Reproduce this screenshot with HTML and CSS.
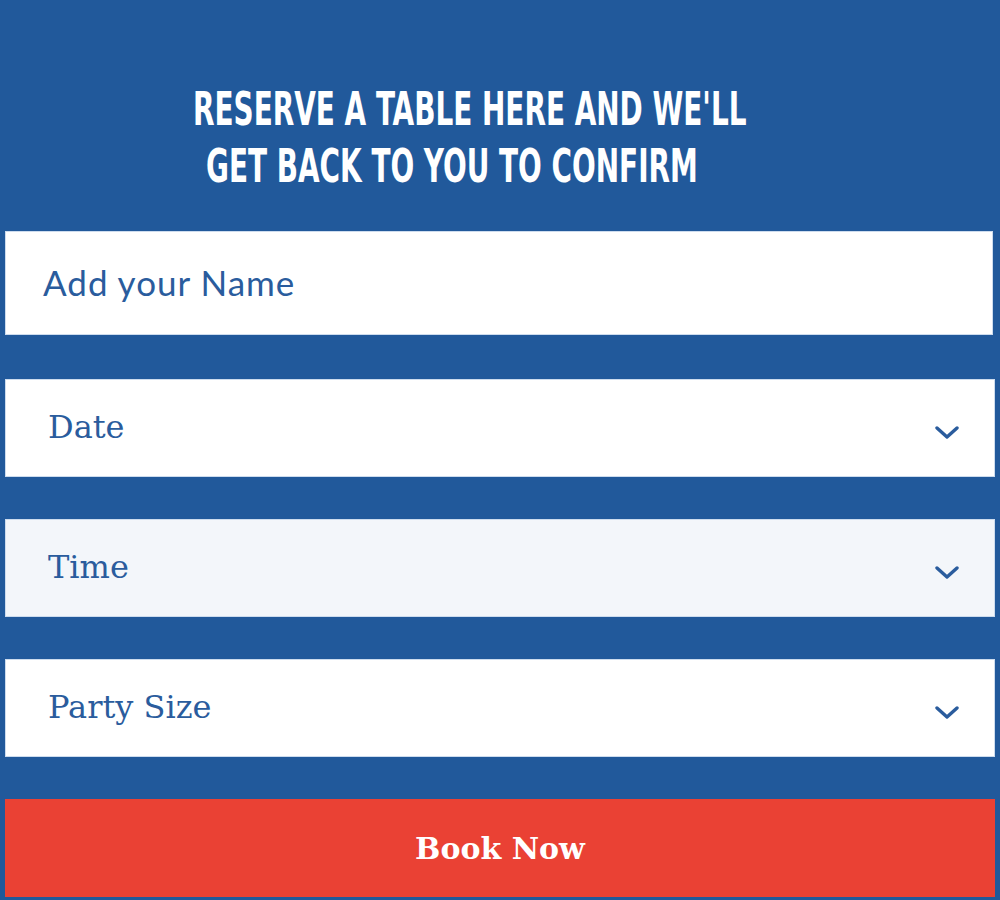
FILE: index.html
```html
<!DOCTYPE html>
<html lang="en">
<head>
<meta charset="utf-8">
<title>Reserve a table</title>
<link rel="stylesheet" href="styles.css">
</head>
<body>
<main class="reserve">
  <h1 class="title">
    <span class="line line-1">RESERVE A TABLE HERE AND WE'LL</span>
    <span class="line line-2">GET BACK TO YOU TO CONFIRM</span>
  </h1>
  <form class="form">
    <div class="field field-name"><span class="label sans">Add your Name</span></div>
    <div class="field field-select"><span class="label">Date</span>
      <svg class="chevron" viewBox="0 0 24 14" width="24" height="14"><path d="M2 2 L12 11 L22 2" fill="none" stroke="currentColor" stroke-width="3.4" stroke-linecap="round" stroke-linejoin="round"/></svg>
    </div>
    <div class="field field-select field-alt"><span class="label">Time</span>
      <svg class="chevron" viewBox="0 0 24 14" width="24" height="14"><path d="M2 2 L12 11 L22 2" fill="none" stroke="currentColor" stroke-width="3.4" stroke-linecap="round" stroke-linejoin="round"/></svg>
    </div>
    <div class="field field-select"><span class="label">Party Size</span>
      <svg class="chevron" viewBox="0 0 24 14" width="24" height="14"><path d="M2 2 L12 11 L22 2" fill="none" stroke="currentColor" stroke-width="3.4" stroke-linecap="round" stroke-linejoin="round"/></svg>
    </div>
    <button type="button" class="book">Book Now</button>
  </form>
</main>
</body>
</html>
```

FILE: styles.css
```css
html, body {
  margin: 0;
  padding: 0;
  background: #21599b;
}

.reserve {
  width: 1000px;
  height: 900px;
  box-sizing: border-box;
  padding: 0 5px;
}

.title {
  margin: 0;
  padding: 80px 0 0 188px;
  display: flex;
  flex-direction: column;
  align-items: flex-start;
  color: #ffffff;
  font-family: "Liberation Sans Narrow", "DejaVu Sans Condensed", sans-serif;
  font-weight: 700;
  font-size: 47px;
  line-height: 57px;
  letter-spacing: 0;
}

.line {
  display: block;
  transform-origin: left center;
  transform: scaleX(0.66);
  white-space: nowrap;
}

.line-2 {
  margin-left: 13px;
}

.form {
  margin-top: 37px;
  display: flex;
  flex-direction: column;
}

.field {
  height: 98px;
  box-sizing: border-box;
  background: #ffffff;
  border: 1px solid #cddcee;
  display: flex;
  align-items: center;
  justify-content: space-between;
  color: #2a5c9d;
  padding: 0 35px 0 42px;
  margin-bottom: 42px;
}

.field-name {
  height: 104px;
  width: 988px;
  margin-bottom: 44px;
  padding-left: 37px;
}

.field-alt {
  background: #f3f6fa;
}

.label {
  font-family: "DejaVu Serif", serif;
  font-size: 32px;
  line-height: 1;
  padding-bottom: 2px;
}

.label.sans {
  font-family: "Lato", "Open Sans", sans-serif;
  font-size: 35px;
  letter-spacing: 1px;
}

.chevron {
  display: block;
  color: #2a5c9d;
  margin-top: 10px;
}

.book {
  height: 98px;
  border: 0;
  margin: 0;
  background: #ea4134;
  color: #ffffff;
  font-family: "DejaVu Serif", serif;
  font-weight: 700;
  font-size: 30px;
  cursor: pointer;
}
```
